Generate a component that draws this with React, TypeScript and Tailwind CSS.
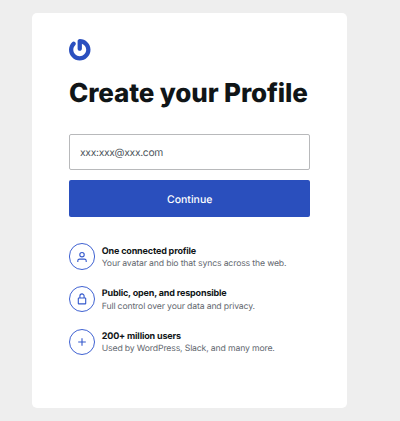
import React from 'react';
import { SiGravatar } from 'react-icons/si';

interface Feature {
  title: string;
  description: string;
  icon: React.ReactNode;
}

const FEATURES: Feature[] = [
  {
    title: 'One connected profile',
    description: 'Your avatar and bio that syncs across the web.',
    icon: (
      <>
        <circle cx="7" cy="4.7" r="2.2" />
        <path d="M2.8 12v-1.2c0-1 .8-1.7 1.8-1.7h4.8c1 0 1.8.7 1.8 1.7V12" />
      </>
    ),
  },
  {
    title: 'Public, open, and responsible',
    description: 'Full control over your data and privacy.',
    icon: (
      <>
        <rect x="3.3" y="6" width="7.4" height="5.9" rx="0.5" />
        <path d="M4.9 6V4a2.1 2.1 0 0 1 4.2 0v2" />
      </>
    ),
  },
  {
    title: '200+ million users',
    description: 'Used by WordPress, Slack, and many more.',
    icon: <path d="M7 3.2v7.6M3.2 7h7.6" />,
  },
];

const FeatureRow: React.FC<{ feature: Feature }> = ({ feature }) => (
  <li className="flex h-[26.4px] items-center gap-[6.4px]">
    <span className="flex size-[26.4px] shrink-0 items-center justify-center rounded-full border border-[#3f62d2] text-[#3358cc]">
      <svg
        viewBox="0 0 14 14"
        className="size-3.5"
        fill="none"
        stroke="currentColor"
        strokeWidth="1.1"
      >
        {feature.icon}
      </svg>
    </span>
    <div className="whitespace-nowrap pt-[3px] leading-[12.5px]">
      <h2 className="text-[9px] font-bold tracking-[-0.16px] text-[#101517]">{feature.title}</h2>
      <p className="text-[8.7px] tracking-[-0.16px] text-[#646970]">{feature.description}</p>
    </div>
  </li>
);

export default function App() {
  return (
    <main className="h-[421px] bg-[#eeeeee] pt-[13px] pl-8 font-['Inter',sans-serif] [text-rendering:geometricPrecision]">
      <section className="h-[395px] w-[315px] rounded-[5px] bg-white px-[37px] pt-[26px]">
        <SiGravatar className="size-[21.5px] text-[#2a4fbf]" />
        <h1 className="mt-[17.5px] whitespace-nowrap text-[26px] leading-8 font-[850] tracking-[-0.12px] text-[#101517]">
          Create your Profile
        </h1>
        <form className="mt-[24px]" onSubmit={(e) => e.preventDefault()}>
          <input
            type="text"
            aria-label="Email"
            defaultValue="xxx:xxx@xxx.com"
            className="block h-9 w-[241.4px] rounded-[2px] border border-[#b8b9bb] px-2.5 pt-[2px] text-[10.3px] tracking-[-0.3px] text-[#50575e] outline-none [text-rendering:geometricPrecision]"
          />
          <button
            type="submit"
            className="mt-2.5 block h-[37px] w-[241.4px] rounded-[2px] bg-[#2a4fbd] pt-[2px] text-[10.5px] font-medium text-white [text-rendering:geometricPrecision]"
          >
            Continue
          </button>
        </form>
        <ul className="mt-[26.4px] space-y-[16.3px]">
          {FEATURES.map((feature) => (
            <FeatureRow key={feature.title} feature={feature} />
          ))}
        </ul>
      </section>
    </main>
  );
}
